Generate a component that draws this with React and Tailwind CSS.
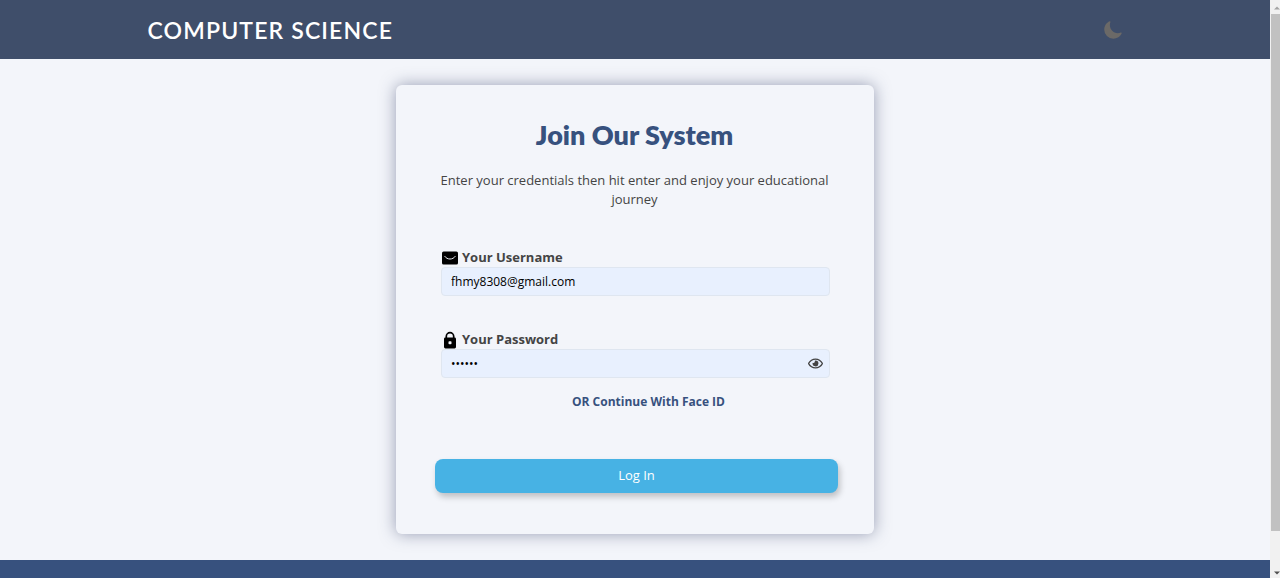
import { useState } from "react";
import { FaRegEye } from "react-icons/fa";
import { IoMoon } from "react-icons/io5";

function MailIcon() {
  return (
    <svg viewBox="0 0 16 14" className="h-[14px] w-4" aria-hidden="true">
      <rect x="0" y="0.6" width="16" height="13" rx="1.6" fill="#000" />
      <path d="M2.8 5.4C5 9 11 9 13.2 5.4" fill="none" stroke="#e8eaf0" strokeWidth="1" strokeLinecap="round" />
    </svg>
  );
}

function LockIcon() {
  return (
    <svg viewBox="0 0 16 18" className="h-[18px] w-4" aria-hidden="true">
      <path d="M4.3 8V5.4a3.7 3.7 0 0 1 7.4 0V8" fill="none" stroke="#000" strokeWidth="1.7" />
      <rect x="2" y="6.6" width="12" height="10.8" rx="1.4" fill="#000" />
      <rect x="6.5" y="10.3" width="3" height="3" rx="0.8" fill="#f3f5fa" />
    </svg>
  );
}

function Field({ id, label, icon, children, ...input }) {
  return (
    <div>
      <label htmlFor={id} className="flex h-[18px] items-center gap-1 pl-px text-[13px] font-bold text-[#444444]">
        {icon}
        {label}
      </label>
      <div className="relative">
        <input
          id={id}
          className="block h-[29px] w-full rounded-sm border border-[#dfe6f0] bg-[#e8f0fe] pl-[9px] pr-8 text-xs text-black outline-none"
          {...input}
        />
        {children}
      </div>
    </div>
  );
}

function ScrollRail() {
  return (
    <div className="flex w-[10px] shrink-0 flex-col items-center bg-[#f1f1f1]" aria-hidden="true">
      <svg viewBox="0 0 10 14" className="h-[14px] w-[10px]">
        <path d="M4 9.5 7 6.5l3 3z" fill="#a3a3a3" />
      </svg>
      <div className="ml-px w-[9px] grow bg-[#c1c1c1]" />
      <svg viewBox="0 0 10 47" className="h-[47px] w-[10px]">
        <path d="M4 40.5h6l-3 3z" fill="#505050" />
      </svg>
    </div>
  );
}

export default function App() {
  const [email, setEmail] = useState("fhmy8308@gmail.com");
  const [password, setPassword] = useState("123456");
  const [visible, setVisible] = useState(false);

  return (
    <div className="flex min-h-screen bg-[#f3f5fa] font-['Open_Sans',sans-serif] text-[#444444]">
      <div className="flex min-w-0 grow flex-col">
        <header className="flex h-[59px] items-center bg-[#3f4e6a] px-6">
          <div className="mx-auto flex w-full max-w-[975px] items-center justify-between">
            <h1 className="font-['Lato',sans-serif] text-[23px] leading-8 font-semibold uppercase tracking-wider text-white">
              <a href="#home">Computer Science</a>
            </h1>
            <button type="button" aria-label="Dark mode" className="text-[#6b6967]">
              <IoMoon className="size-5" />
            </button>
          </div>
        </header>

        <main className="px-4 py-[26px]">
          <form
            onSubmit={(e) => e.preventDefault()}
            className="mx-auto w-full max-w-[478px] rounded-md bg-[#f3f5fa] pr-9 pl-[39px] pt-8 pb-[41px] shadow-[0_0_16px_rgba(60,70,110,0.5)]"
          >
            <h2 className="pr-1 text-center font-['Lato',sans-serif] text-[27px] leading-9 font-extrabold text-[#37517e]">
              Join Our System
            </h2>
            <p className="mt-[18px] pr-1 text-center text-[13px] leading-[19px]">
              Enter your credentials then hit enter and enjoy your educational journey
            </p>

            <div className="mt-10 flex flex-col gap-[35px] pr-2 pl-[6px]">
              <Field
                id="username"
                label="Your Username"
                icon={<MailIcon />}
                type="email"
                value={email}
                onChange={(e) => setEmail(e.target.value)}
              />
              <Field
                id="password"
                label="Your Password"
                icon={<LockIcon />}
                type={visible ? "text" : "password"}
                value={password}
                onChange={(e) => setPassword(e.target.value)}
              >
                <button
                  type="button"
                  aria-label="Show password"
                  onClick={() => setVisible(!visible)}
                  className="absolute inset-y-0 right-[7px] flex items-center"
                >
                  <FaRegEye className="size-[15px]" />
                </button>
              </Field>
            </div>

            <div className="mt-[14px] pl-6 text-center text-xs leading-5 font-bold text-[#37517e]">
              <a href="#face-id">OR Continue With Face ID</a>
            </div>

            <button
              type="submit"
              className="mt-[47px] block h-[34px] w-full rounded-lg bg-[#47b2e4] text-[13px] text-white shadow-[2px_4px_6px_rgba(0,0,0,0.22)]"
            >
              Log In
            </button>
          </form>
        </main>

        <footer className="min-h-[18px] grow bg-[#37517e]" />
      </div>
      <ScrollRail />
    </div>
  );
}
